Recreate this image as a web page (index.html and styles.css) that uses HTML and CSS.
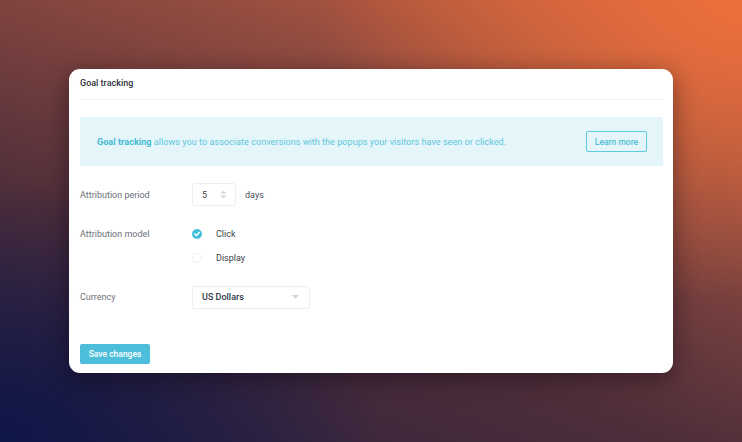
FILE: index.html
```html
<!DOCTYPE html>
<html>
<head>
<meta charset="utf-8">
<link rel="stylesheet" href="styles.css">
</head>
<body>
<div class="stage">
  <div class="card">
    <div class="card-header">Goal tracking</div>
    <div class="info">
      <p class="info-text"><strong>Goal tracking</strong> allows you to associate conversions with the popups your visitors have seen or clicked.</p>
      <button class="btn-outline">Learn more</button>
    </div>
    <div class="row row-period">
      <div class="label">Attribution period</div>
      <div class="control">
        <div class="number">
          <span class="num-val">5</span>
          <svg class="spin" width="7" height="9" viewBox="0 0 7 9"><path d="M3.5 0.5 L6.5 3.5 H0.5 Z M3.5 8.5 L6.5 5.5 H0.5 Z" fill="#d2d5da"/></svg>
        </div>
        <span class="unit">days</span>
      </div>
    </div>
    <div class="row row-model">
      <div class="label">Attribution model</div>
      <div class="radios">
        <div class="radio-item">
          <span class="radio checked"><svg width="10" height="10" viewBox="0 0 10 10"><circle cx="5" cy="5" r="5" fill="#46bfdb"/><path d="M2.8 5.1 L4.4 6.6 L7.3 3.6" stroke="#fff" stroke-width="1.4" fill="none" stroke-linecap="round" stroke-linejoin="round"/></svg></span>
          <span class="radio-label">Click</span>
        </div>
        <div class="radio-item">
          <span class="radio"></span>
          <span class="radio-label">Display</span>
        </div>
      </div>
    </div>
    <div class="row row-currency">
      <div class="label">Currency</div>
      <div class="select">
        <span>US Dollars</span>
        <svg width="7" height="4" viewBox="0 0 7 4"><path d="M0 0 H7 L3.5 4 Z" fill="#d2d5da"/></svg>
      </div>
    </div>
    <button class="btn-primary">Save changes</button>
  </div>
</div>
</body>
</html>
```
FILE: styles.css
```css
html, body {
  margin: 0;
  padding: 0;
}
body {
  width: 742px;
  height: 442px;
  overflow: hidden;
  font-family: Roboto, "Liberation Sans", sans-serif;
  background:
    radial-gradient(ellipse 420px 300px at 100% 0%, rgba(236,112,60,0.95), rgba(236,112,60,0) 100%),
    radial-gradient(ellipse 380px 260px at 0% 100%, rgba(14,22,72,1), rgba(14,22,72,0) 100%),
    linear-gradient(20deg, #2a2040 0%, #4e2e3a 35%, #8e4a40 70%, #d4643c 100%);
}
.stage {
  padding: 69px 0 0 69px;
}
.card {
  width: 604px;
  height: 304px;
  box-sizing: border-box;
  background: #fff;
  border-radius: 11px;
  padding: 0 10px 0 11px;
  box-shadow: 0 6px 24px rgba(10, 5, 15, 0.45);
}
.card-header {
  height: 31px;
  box-sizing: border-box;
  padding-top: 9px;
  font-size: 9px;
  font-weight: 500;
  color: #2f343b;
  border-bottom: 1px solid #eef0f2;
}
.info {
  margin-top: 17px;
  height: 49px;
  background: #e4f6fa;
  border-radius: 2px;
  display: flex;
  align-items: center;
  justify-content: space-between;
  padding: 0 16px 0 17px;
}
.info-text {
  margin: 0;
  font-size: 9.1px;
  letter-spacing: 0.02px;
  color: #5fc6dc;
}
.info-text strong {
  color: #44bad4;
  font-weight: 700;
}
.btn-outline {
  width: 61px;
  height: 21px;
  box-sizing: border-box;
  border: 1px solid #5ccbe0;
  border-radius: 2px;
  background: transparent;
  font-family: inherit;
  font-size: 8.5px;
  font-weight: 500;
  color: #4fbfd8;
  padding: 0;
}
.row {
  display: grid;
  grid-template-columns: 112px 1fr;
  align-items: center;
}
.label {
  font-size: 9px;
  color: #6b7079;
}
.row-period {
  margin-top: 17px;
  height: 23px;
}
.control {
  display: flex;
  align-items: center;
  gap: 9px;
}
.number {
  width: 44px;
  height: 23px;
  box-sizing: border-box;
  border: 1px solid #eceef1;
  border-radius: 3px;
  display: flex;
  align-items: center;
  padding-left: 9px;
  gap: 13px;
}
.num-val, .unit, .radio-label {
  font-size: 9px;
  color: #3a3f47;
}
.unit {
  color: #4a4f57;
}
.row-model {
  margin-top: 20px;
  align-items: start;
}
.row-model .label {
  line-height: 16px;
}
.radios {
  display: flex;
  flex-direction: column;
  gap: 7.5px;
}
.radio-item {
  display: flex;
  align-items: center;
  height: 16px;
  gap: 14px;
}
.radio {
  width: 10px;
  height: 10px;
  box-sizing: border-box;
  border: 1px solid #eef0f2;
  border-radius: 50%;
  display: block;
}
.radio.checked {
  border: none;
}
.radio svg {
  display: block;
}
.row-currency {
  margin-top: 20px;
  height: 23px;
}
.select {
  width: 118px;
  height: 23px;
  box-sizing: border-box;
  border: 1px solid #eceef1;
  border-radius: 3px;
  display: flex;
  align-items: center;
  justify-content: space-between;
  padding: 0 10px 0 9px;
  font-size: 9px;
  font-weight: 500;
  color: #2f3a4a;
}
.btn-primary {
  display: block;
  margin-top: 35px;
  width: 70px;
  height: 20px;
  border: none;
  border-radius: 2px;
  background: #4dbed9;
  color: #fff;
  font-family: inherit;
  font-size: 8.5px;
  font-weight: 500;
  padding: 0;
}
```
